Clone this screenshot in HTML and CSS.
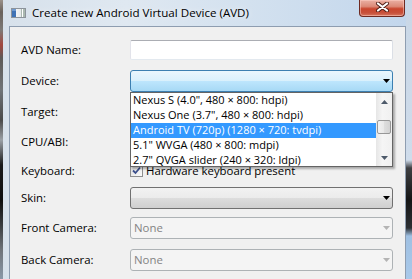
FILE: index.html
```html
<!DOCTYPE html>
<html>
<head>
<meta charset="utf-8">
<link rel="stylesheet" href="styles.css">
</head>
<body>
<div class="screen">
  <div class="desk"></div>
  <div class="window">
    <div class="titlebar">
      <svg class="appicon" width="15" height="10" viewBox="0 0 15 10">
        <defs>
          <linearGradient id="ig" x1="0" y1="0" x2="1" y2="0">
            <stop offset="0" stop-color="#ffffff"/>
            <stop offset="1" stop-color="#d8dde2"/>
          </linearGradient>
        </defs>
        <rect x="0.5" y="0.5" width="14" height="9" fill="url(#ig)" stroke="#8c939b"/>
        <rect x="1" y="1" width="4" height="8" fill="#3f72b5"/>
        <rect x="1" y="1" width="4" height="2" fill="#6f9ad0"/>
        <rect x="10" y="1" width="4" height="8" fill="#aab8b0"/>
        <rect x="11" y="1" width="1" height="8" fill="#ffffff"/>
      </svg>
      <span class="title">Create new Android Virtual Device (AVD)</span>
      <div class="close">
        <svg width="15" height="10" viewBox="0 0 15 10">
          <path d="M3 1.5 L12 8.5 M12 1.5 L3 8.5" stroke="#4e1c15" stroke-width="4" stroke-linecap="round"/>
          <path d="M3 1.5 L12 8.5 M12 1.5 L3 8.5" stroke="#ffffff" stroke-width="2.2" stroke-linecap="round"/>
        </svg>
      </div>
    </div>
    <div class="client">
      <div class="form">
        <div class="row h30">
          <span class="label">AVD Name:</span>
          <div class="field"><div class="input"></div></div>
        </div>
        <div class="row h32">
          <span class="label">Device:</span>
          <div class="field">
            <div class="combo combo-hot">
              <span class="combo-text"></span>
              <svg class="arrow" width="7" height="4" viewBox="0 0 7 4"><path d="M0 0H7L3.5 4Z" fill="#000"/></svg>
            </div>
            <div class="dropdown">
              <div class="items">
                <div class="item">Nexus S (4.0", 480 × 800: hdpi)</div>
                <div class="item">Nexus One (3.7", 480 × 800: hdpi)</div>
                <div class="item selected">Android TV (720p) (1280 × 720: tvdpi)</div>
                <div class="item">5.1" WVGA (480 × 800: mdpi)</div>
                <div class="item">2.7" QVGA slider (240 × 320: ldpi)</div>
              </div>
              <div class="scrollbar">
                <div class="sb-btn">
                  <svg width="7" height="4" viewBox="0 0 7 4"><path d="M0 4H7L3.5 0Z" fill="#4d5a6a"/></svg>
                </div>
                <div class="sb-track"><div class="sb-thumb"></div></div>
                <div class="sb-btn">
                  <svg width="7" height="4" viewBox="0 0 7 4"><path d="M0 0H7L3.5 4Z" fill="#4d5a6a"/></svg>
                </div>
              </div>
            </div>
          </div>
        </div>
        <div class="row h30">
          <span class="label">Target:</span>
          <div class="field">
            <div class="combo combo-normal"><span class="combo-text"></span>
              <svg class="arrow" width="7" height="4" viewBox="0 0 7 4"><path d="M0 0H7L3.5 4Z" fill="#000"/></svg></div>
          </div>
        </div>
        <div class="row h30">
          <span class="label">CPU/ABI:</span>
          <div class="field">
            <div class="combo combo-normal"><span class="combo-text"></span>
              <svg class="arrow" width="7" height="4" viewBox="0 0 7 4"><path d="M0 0H7L3.5 4Z" fill="#000"/></svg></div>
          </div>
        </div>
        <div class="row h27">
          <span class="label">Keyboard:</span>
          <div class="field check-field">
            <span class="checkbox">
              <svg width="9" height="9" viewBox="0 0 9 9"><path d="M1 4.5 L3.5 7 L8 1.5" fill="none" stroke="#3b4f8c" stroke-width="1.8"/></svg>
            </span>
            <span class="check-label">Hardware keyboard present</span>
          </div>
        </div>
        <div class="row h28">
          <span class="label">Skin:</span>
          <div class="field">
            <div class="combo combo-normal"><span class="combo-text"></span>
              <svg class="arrow" width="7" height="4" viewBox="0 0 7 4"><path d="M0 0H7L3.5 4Z" fill="#000"/></svg></div>
          </div>
        </div>
        <div class="row h32">
          <span class="label">Front Camera:</span>
          <div class="field">
            <div class="combo combo-disabled"><span class="combo-text">None</span>
              <svg class="arrow" width="7" height="4" viewBox="0 0 7 4"><path d="M0 0H7L3.5 4Z" fill="#b4b4b4"/></svg></div>
          </div>
        </div>
        <div class="row h32">
          <span class="label">Back Camera:</span>
          <div class="field">
            <div class="combo combo-disabled"><span class="combo-text">None</span>
              <svg class="arrow" width="7" height="4" viewBox="0 0 7 4"><path d="M0 0H7L3.5 4Z" fill="#b4b4b4"/></svg></div>
          </div>
        </div>
      </div>
    </div>
  </div>
</div>
</body>
</html>
```

FILE: styles.css
```css
* {
  box-sizing: border-box;
  margin: 0;
  padding: 0;
}

html, body {
  width: 412px;
  height: 279px;
  overflow: hidden;
}

body {
  font-family: "Open Sans", "Noto Sans", sans-serif;
  font-size: 11px;
  color: #000;
  background: #2a2a2a;
}

.screen {
  display: flex;
  width: 412px;
  height: 279px;
}

.desk {
  width: 3px;
  flex: none;
  background: linear-gradient(to bottom,
    #9a918a 0px, #6a625c 12px, #7d7a78 30px, #a2473f 45px, #5d5a58 58px,
    #707478 90px, #4a4a4a 120px, #9aa0a6 140px, #1a1a1a 165px, #0e0e0e 200px,
    #3a3d40 225px, #6f747a 250px, #8a98a8 279px);
}

.window {
  flex: 1;
  display: flex;
  flex-direction: column;
  padding: 0 6px 0 6px;
  background:
    linear-gradient(to bottom, #c9d7e6 0px, #cfdceb 160px, #3e3f42 168px, #141516 200px, #2c2f33 228px, #9fc0e2 236px, #a9c9ea 279px) right top / 6px 100% no-repeat,
    linear-gradient(to right, #d7e1eb 0%, #dfe8f1 30%, #d3e1ef 60%, #c2d6ec 100%);
}

.titlebar {
  height: 26px;
  flex: none;
  display: flex;
  align-items: flex-start;
}

.appicon {
  flex: none;
  margin: 8px 0 0 2px;
}

.title {
  margin: 6px 0 0 6px;
  line-height: 14px;
  font-size: 11.6px;
  color: #000;
  white-space: nowrap;
  text-shadow: 0 0 6px rgba(255, 255, 255, 0.9);
}

.close {
  margin-left: auto;
  margin-right: 1px;
  width: 46px;
  height: 17px;
  flex: none;
  border: 1px solid #6e2a21;
  border-top: none;
  border-radius: 0 0 4px 4px;
  background: linear-gradient(to bottom, #eab0a3 0%, #dc8a78 40%, #c9462e 55%, #c7503a 80%, #d6765f 100%);
  box-shadow: inset 0 0 0 1px rgba(255, 210, 200, 0.5);
  display: flex;
  justify-content: center;
  align-items: flex-start;
  padding-top: 2px;
}

.client {
  flex: 1;
  background: #f0f0f0;
  border: 1px solid #8e9db0;
  border-bottom: none;
}

.form {
  padding: 8px 12px 0 11px;
  display: flex;
  flex-direction: column;
}

.row {
  display: flex;
  align-items: center;
}

.h27 { height: 27px; }
.h28 { height: 28px; }
.h30 { height: 30px; }
.h32 { height: 32px; }

.label {
  width: 109px;
  flex: none;
  font-size: 11.4px;
  line-height: 14px;
  white-space: nowrap;
}

.field {
  flex: 1;
  position: relative;
}

.input {
  height: 20px;
  background: #fff;
  border: 1px solid;
  border-color: #abadb3 #dbdfe6 #e3e9ef #e2e3ea;
  border-radius: 2px;
}

.combo {
  height: 22px;
  border: 1px solid #707070;
  border-radius: 3px;
  display: flex;
  align-items: center;
  justify-content: space-between;
  padding: 0 2px 0 3px;
}

.combo-text {
  font-size: 11.4px;
  line-height: 14px;
}

.arrow {
  flex: none;
}

.combo-hot {
  border-color: #3c7fb1;
  background: linear-gradient(to bottom, #eaf6fd 0%, #d9f0fc 50%, #bee6fd 50%, #a7d9f5 100%);
}

.combo-normal {
  background: linear-gradient(to bottom, #f2f2f2 0%, #ebebeb 50%, #dddddd 50%, #cfcfcf 100%);
}

.combo-disabled {
  border-color: #adb2b5;
  background: #f4f4f4;
  color: #838383;
}

.check-field {
  display: flex;
  align-items: center;
}

.checkbox {
  width: 13px;
  height: 13px;
  border: 1px solid #8e8f8f;
  background: linear-gradient(135deg, #dcdcdc, #fbfbfb);
  display: flex;
  align-items: center;
  justify-content: center;
  flex: none;
}

.check-label {
  margin-left: 3px;
  font-size: 11.4px;
  line-height: 14px;
}

.dropdown {
  position: absolute;
  top: 100%;
  left: 0;
  right: 0;
  height: 75px;
  background: #fff;
  border: 1px solid #646464;
  box-shadow: 2px 2px 2px rgba(0, 0, 0, 0.3);
  display: flex;
  overflow: hidden;
  z-index: 5;
}

.items {
  flex: 1;
  display: flex;
  flex-direction: column;
}

.item {
  height: 15px;
  flex: none;
  line-height: 14px;
  padding-left: 2px;
  white-space: nowrap;
}

.item.selected {
  background: #3399ff;
  color: #fff;
}

.scrollbar {
  width: 16px;
  flex: none;
  display: flex;
  flex-direction: column;
  background: linear-gradient(to right, #e6e6e6, #f5f5f5 40%, #f0f0f0);
}

.sb-btn {
  height: 17px;
  flex: none;
  display: flex;
  align-items: center;
  justify-content: center;
}

.sb-track {
  flex: 1;
  padding-top: 10px;
  display: flex;
  justify-content: center;
}

.sb-thumb {
  width: 14px;
  height: 14px;
  border: 1px solid #979797;
  border-radius: 2px;
  background: linear-gradient(to right, #f2f2f2, #e8e8e8 50%, #dedede 50%, #d3d3d3);
}
```
